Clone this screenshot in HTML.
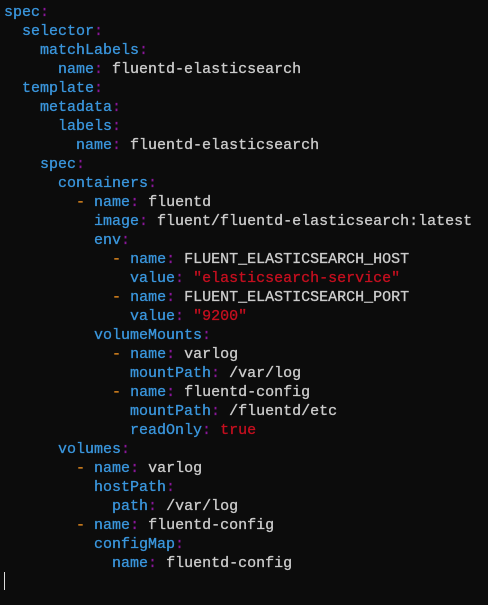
<!DOCTYPE html><html><head><style>
body{margin:0;background:#0c0c0c;width:488px;height:605px;overflow:hidden}
pre{margin:0;padding:3px 0 0 4px;font-family:"Liberation Mono",monospace;font-size:15px;line-height:19px;color:#cccccc;-webkit-text-stroke:0.3px}
.k{color:#3a96dd}.c{color:#881798}.d{color:#d2801e}.s{color:#c50f1f}
.cur{position:absolute;left:4px;top:572px;width:1px;height:18px;background:#ddd}
</style></head><body><pre><span class="k">spec</span><span class="c">:</span>
  <span class="k">selector</span><span class="c">:</span>
    <span class="k">matchLabels</span><span class="c">:</span>
      <span class="k">name</span><span class="c">:</span> fluentd-elasticsearch
  <span class="k">template</span><span class="c">:</span>
    <span class="k">metadata</span><span class="c">:</span>
      <span class="k">labels</span><span class="c">:</span>
        <span class="k">name</span><span class="c">:</span> fluentd-elasticsearch
    <span class="k">spec</span><span class="c">:</span>
      <span class="k">containers</span><span class="c">:</span>
        <span class="d">-</span> <span class="k">name</span><span class="c">:</span> fluentd
          <span class="k">image</span><span class="c">:</span> fluent/fluentd-elasticsearch:latest
          <span class="k">env</span><span class="c">:</span>
            <span class="d">-</span> <span class="k">name</span><span class="c">:</span> FLUENT_ELASTICSEARCH_HOST
              <span class="k">value</span><span class="c">:</span> <span class="s">"elasticsearch-service"</span>
            <span class="d">-</span> <span class="k">name</span><span class="c">:</span> FLUENT_ELASTICSEARCH_PORT
              <span class="k">value</span><span class="c">:</span> <span class="s">"9200"</span>
          <span class="k">volumeMounts</span><span class="c">:</span>
            <span class="d">-</span> <span class="k">name</span><span class="c">:</span> varlog
              <span class="k">mountPath</span><span class="c">:</span> /var/log
            <span class="d">-</span> <span class="k">name</span><span class="c">:</span> fluentd-config
              <span class="k">mountPath</span><span class="c">:</span> /fluentd/etc
              <span class="k">readOnly</span><span class="c">:</span> <span class="s">true</span>
      <span class="k">volumes</span><span class="c">:</span>
        <span class="d">-</span> <span class="k">name</span><span class="c">:</span> varlog
          <span class="k">hostPath</span><span class="c">:</span>
            <span class="k">path</span><span class="c">:</span> /var/log
        <span class="d">-</span> <span class="k">name</span><span class="c">:</span> fluentd-config
          <span class="k">configMap</span><span class="c">:</span>
            <span class="k">name</span><span class="c">:</span> fluentd-config
</pre><div class="cur"></div></body></html>
